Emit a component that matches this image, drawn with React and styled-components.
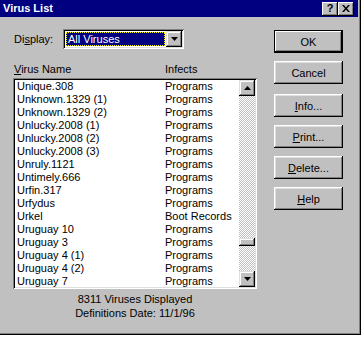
import React from 'react';
import styled, { createGlobalStyle } from 'styled-components';

const GlobalStyle = createGlobalStyle`
  html, body { margin: 0; padding: 0; background: #fff; }
  body { font-family: "Liberation Sans", Arial, sans-serif; font-size: 11px; }
`;

// styled
const Window = styled.div`
  width: 361px;
  height: 335px;
  background: #c0c0c0;
  box-sizing: border-box;
  box-shadow: inset -1px -1px 0 #000, inset -2px -2px 0 #808080;
  display: flex;
  flex-direction: column;
  color: #000;
`;
const TitleBar = styled.div`
  height: 17px;
  margin-right: 3px;
  background: #000080;
  display: flex;
  align-items: center;
  padding: 0 4px 0 3px;
`;
const Title = styled.div`
  flex: 1;
  color: #fff;
  font-weight: bold;
  font-size: 11px;
  line-height: 17px;
`;
const TitleButtons = styled.div`
  display: flex;
`;
const TitleButton = styled.div`
  width: 16px;
  height: 14px;
  box-sizing: border-box;
  background: #c0c0c0;
  box-shadow: inset -1px -1px 0 #000, inset 1px 1px 0 #fff, inset -2px -2px 0 #808080;
  display: flex;
  align-items: center;
  justify-content: center;
  font-weight: bold;
  font-size: 11px;
  line-height: 1;
`;
const Body = styled.div`
  flex: 1;
  display: flex;
  padding: 12px 0 0 13px;
`;
const LeftCol = styled.div`
  width: 244px;
  display: flex;
  flex-direction: column;
`;
const DisplayRow = styled.div`
  display: flex;
  align-items: center;
  height: 20px;
`;
const Label = styled.span`
  width: 49px;
  padding-left: 1px;
`;
const Combo = styled.div`
  width: 121px;
  height: 20px;
  box-sizing: border-box;
  background: #fff;
  box-shadow: inset 1px 1px 0 #808080, inset -1px -1px 0 #fff, inset 2px 2px 0 #000, inset -2px -2px 0 #dfdfdf;
  padding: 2px;
  display: flex;
`;
const ComboValue = styled.div`
  flex: 1;
  margin: 1px;
  background: #000080;
  color: #fff;
  outline: 1px dotted #ffff00;
  outline-offset: -1px;
  padding-left: 2px;
  line-height: 14px;
`;
const ArrowButton = styled.div`
  width: 16px;
  height: ${p => p.$h || 16}px;
  box-sizing: border-box;
  background: #c0c0c0;
  box-shadow: inset -1px -1px 0 #000, inset 1px 1px 0 #dfdfdf, inset -2px -2px 0 #808080, inset 2px 2px 0 #fff;
  display: flex;
  align-items: center;
  justify-content: center;
  flex-shrink: 0;
`;
const HeaderRow = styled.div`
  display: flex;
  margin-top: 13px;
  height: 16px;
  line-height: 14px;
`;
const HeaderCell = styled.span`
  width: ${p => p.$w}px;
  padding-left: 1px;
`;
const ListBox = styled.div`
  height: 211px;
  box-sizing: border-box;
  background: #fff;
  box-shadow: inset 1px 1px 0 #808080, inset -1px -1px 0 #fff, inset 2px 2px 0 #000, inset -2px -2px 0 #dfdfdf;
  padding: 2px;
  display: flex;
  overflow: hidden;
`;
const Rows = styled.div`
  flex: 1;
  overflow: hidden;
`;
const Row = styled.div`
  display: flex;
  height: 13px;
  line-height: 13px;
  white-space: nowrap;
`;
const Cell = styled.span`
  width: ${p => p.$w}px;
  padding-left: 2px;
`;
const ScrollBar = styled.div`
  width: 16px;
  display: flex;
  flex-direction: column;
`;
const Track = styled.div`
  flex: 1;
  background-image: conic-gradient(#fff 25%, #c0c0c0 0 50%, #fff 0 75%, #c0c0c0 0);
  background-size: 2px 2px;
  display: flex;
  flex-direction: column;
  justify-content: flex-end;
  padding-bottom: 25px;
`;
const Thumb = styled(ArrowButton)``;
const Status = styled.div`
  text-align: center;
  line-height: 14px;
  padding-top: 3px;
`;
const RightCol = styled.div`
  margin-left: 17px;
  padding-top: 1px;
  display: flex;
  flex-direction: column;
  gap: 8px;
`;
const Button = styled.div`
  width: 69px;
  height: 23px;
  box-sizing: border-box;
  background: #c0c0c0;
  box-shadow: ${p => p.$default
    ? 'inset 0 0 0 1px #000, inset -2px -2px 0 #000, inset 2px 2px 0 #fff, inset -3px -3px 0 #808080'
    : 'inset -1px -1px 0 #000, inset 1px 1px 0 #fff, inset -2px -2px 0 #808080, inset 2px 2px 0 #dfdfdf'};
  display: flex;
  align-items: center;
  justify-content: center;
  margin-bottom: ${p => p.$extra || 0}px;
`;
const U = styled.span`
  text-decoration: underline;
  text-underline-offset: 1px;
`;

const Tri = ({ up }) => (
  <svg width="7" height="4" viewBox="0 0 7 4">
    <path d={up ? 'M3.5 0 L7 4 L0 4 Z' : 'M0 0 L7 0 L3.5 4 Z'} fill="#000" />
  </svg>
);

const rows = [
  ['Unique.308', 'Programs'],
  ['Unknown.1329 (1)', 'Programs'],
  ['Unknown.1329 (2)', 'Programs'],
  ['Unlucky.2008 (1)', 'Programs'],
  ['Unlucky.2008 (2)', 'Programs'],
  ['Unlucky.2008 (3)', 'Programs'],
  ['Unruly.1121', 'Programs'],
  ['Untimely.666', 'Programs'],
  ['Urfin.317', 'Programs'],
  ['Urfydus', 'Programs'],
  ['Urkel', 'Boot Records'],
  ['Uruguay 10', 'Programs'],
  ['Uruguay 3', 'Programs'],
  ['Uruguay 4 (1)', 'Programs'],
  ['Uruguay 4 (2)', 'Programs'],
  ['Uruguay 7', 'Programs'],
];

// view
const App = () => (
  <>
    <GlobalStyle />
    <Window>
      <TitleBar>
        <Title>Virus List</Title>
        <TitleButtons>
          <TitleButton>?</TitleButton>
          <TitleButton>
            <svg width="8" height="7" viewBox="0 0 8 7">
              <path d="M0 0h2l2 2.5L6 0h2L5 3.5 8 7H6L4 4.5 2 7H0l3-3.5z" fill="#000" />
            </svg>
          </TitleButton>
        </TitleButtons>
      </TitleBar>
      <Body>
        <LeftCol>
          <DisplayRow>
            <Label>Di<U>s</U>play:</Label>
            <Combo>
              <ComboValue>All Viruses</ComboValue>
              <ArrowButton><Tri /></ArrowButton>
            </Combo>
          </DisplayRow>
          <HeaderRow>
            <HeaderCell $w={150}><U>V</U>irus Name</HeaderCell>
            <HeaderCell>Infects</HeaderCell>
          </HeaderRow>
          <ListBox>
            <Rows>
              {rows.map(([name, infects], i) => (
                <Row key={i}>
                  <Cell $w={146}>{name}</Cell>
                  <Cell>{infects}</Cell>
                </Row>
              ))}
            </Rows>
            <ScrollBar>
              <ArrowButton><Tri up /></ArrowButton>
              <Track>
                <Thumb $h={8} />
              </Track>
              <ArrowButton><Tri /></ArrowButton>
            </ScrollBar>
          </ListBox>
          <Status>
            8311 Viruses Displayed<br />
            Definitions Date: 11/1/96
          </Status>
        </LeftCol>
        <RightCol>
          <Button $default>OK</Button>
          <Button $extra={2}>Cancel</Button>
          <Button><span><U>I</U>nfo...</span></Button>
          <Button><span><U>P</U>rint...</span></Button>
          <Button><span><U>D</U>elete...</span></Button>
          <Button><span><U>H</U>elp</span></Button>
        </RightCol>
      </Body>
    </Window>
  </>
);

export default App;
